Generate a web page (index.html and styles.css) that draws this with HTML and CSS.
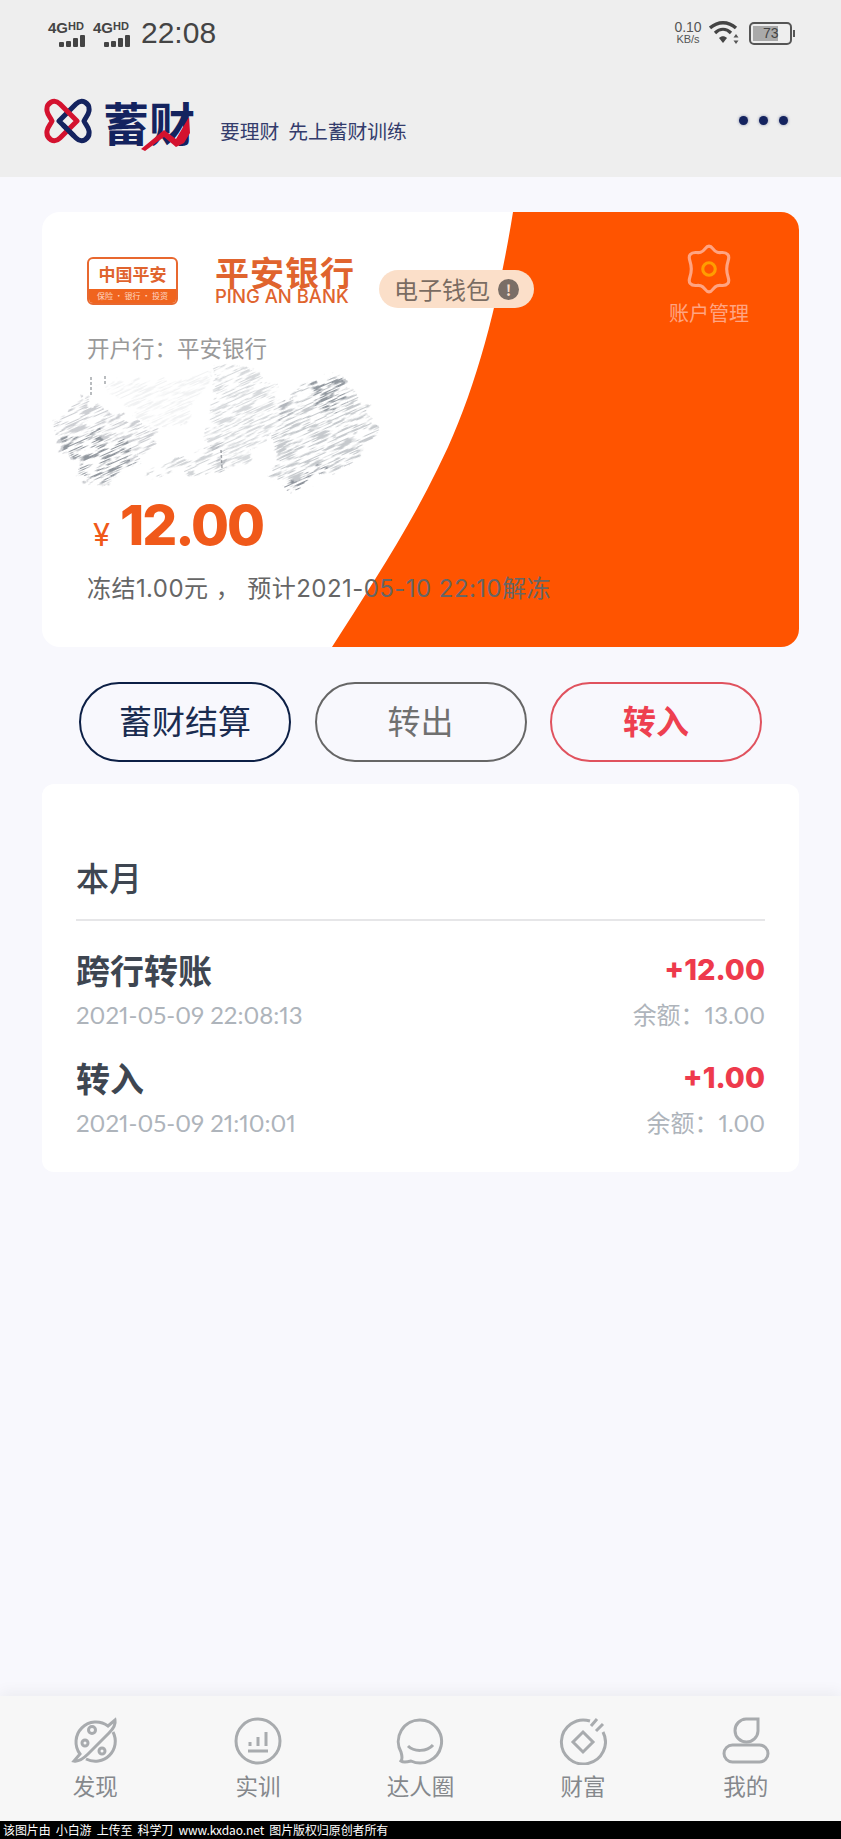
FILE: index.html
```html
<!DOCTYPE html>
<html lang="zh-CN">
<head>
    <meta charset="UTF-8">
    <meta name="viewport" content="width=device-width, initial-scale=1.0">
    <title>蓄财</title>
    <link rel="stylesheet" href="styles.css">
</head>
<body>
    <header class="top">
        <div class="status">
            <div class="status-left">
                <div class="sim">
                    <span class="sim-text">4G<small>HD</small></span>
                    <span class="sim-bars"><i class="b1"></i><i class="b2"></i><i class="b3"></i><i class="b4"></i></span>
                </div>
                <div class="sim">
                    <span class="sim-text">4G<small>HD</small></span>
                    <span class="sim-bars"><i class="b1"></i><i class="b2"></i><i class="b3"></i><i class="b4"></i></span>
                </div>
                <span class="clock">22:08</span>
            </div>
            <div class="status-right">
                <div class="speed"><span>0.10</span><small>KB/s</small></div>
                <svg class="wifi" width="32" height="24" viewBox="0 0 32 24">
                    <path d="M1 7C9 0 19 0 27 7" fill="none" stroke="#444" stroke-width="3.4"/>
                    <path d="M6 12C11 7 17 7 22 12" fill="none" stroke="#444" stroke-width="3.2"/>
                    <path d="M10 17C12.500 14.500 15.500 14.500 18 17L14 22Z" fill="#444"/>
                    <path d="M27 13l2.500 3.500h-5zM27 23l2.500-3.500h-5z" fill="#555"/>
                </svg>
                <div class="battery"><div class="battery-fill"></div><span>73</span></div>
            </div>
        </div>
        <div class="brand">
            <svg class="brand-mark" width="50" height="46" viewBox="0 0 50 46">
                <path d="M16 23L33 6C39 0 47 5 46 13C45.500 17 42 20 41 23C42 26 45.500 29 46 33C47 41 39 46 33 40Z" fill="none" stroke="#14235f" stroke-width="5" stroke-linejoin="round"/>
                <path d="M34 23L17 6C11 0 3 5 4 13C4.500 17 8 20 9 23C8 26 4.500 29 4 33C3 41 11 46 17 40Z" fill="none" stroke="#d4122f" stroke-width="5" stroke-linejoin="round"/>
                <path d="M31 38L20 27" fill="none" stroke="#14235f" stroke-width="5"/>
            </svg>
            <div class="brand-name">
                <span>蓄财</span>
                <svg class="brand-arrow" width="52" height="36" viewBox="0 0 52 36">
                    <path d="M1 32L24 13L36 22L49 0L50 16L44 26L36 30L24 20L5 34Z" fill="#d4122f"/>
                </svg>
            </div>
            <span class="tagline">要理财&nbsp;&nbsp;先上蓄财训练</span>
            <div class="more"><i></i><i></i><i></i></div>
        </div>
    </header>

    <main class="main">
        <section class="card">
            <svg class="card-bg" width="757" height="435" viewBox="0 0 757 435">
                <path d="M471 0C455 100 430 190 395 258C365 320 325 380 290 435L757 435L757 0Z" fill="#ff5400"/>
            </svg>

            <svg class="scribble" width="350" height="140" viewBox="0 0 350 140">
                <defs>
                    <filter id="grain" x="-10%" y="-30%" width="120%" height="160%">
                        <feTurbulence type="fractalNoise" baseFrequency="0.05 0.1" numOctaves="3" seed="9" result="wob"/>
                        <feDisplacementMap in="SourceGraphic" in2="wob" scale="22" xChannelSelector="R" yChannelSelector="G" result="rough"/>
                        <feTurbulence type="fractalNoise" baseFrequency="0.05 0.6" numOctaves="3" seed="4" result="n"/>
                        <feColorMatrix in="n" type="matrix" values="0 0 0 0 0 0 0 0 0 0 0 0 0 0 0 8 0 0 0 -3.900" result="m"/>
                        <feComposite in="rough" in2="m" operator="in"/>
                    </filter>
                </defs>
                <g transform="rotate(-24 175 70)">
                    <g filter="url(#grain)">
                        <g transform="rotate(24 175 70)" fill="#8d939b">
                            <path d="M14 62L43 37L118 70L103 97L57 128L45 120L16 78Z" opacity=".45"/>
                            <path d="M19 72L60 72L100 95L58 126L45 118Z" opacity=".95"/>
                            <path d="M60 25L120 20L170 15L150 60L118 70Z" opacity=".12"/>
                            <path d="M175 8L207 3L233 27L253 50L200 107L180 112L165 70Z" opacity=".35"/>
                            <path d="M110 108L185 85L182 112L105 118Z" opacity=".4"/>
                            <path d="M240 45L267 23L300 15L340 67L333 87L250 132L233 120Z" opacity=".5"/>
                            <path d="M270 20L300 18L305 45L275 50Z" opacity=".9"/>
                            <path d="M240 125L285 105L290 112L250 132Z"/>
                        </g>
                    </g>
                </g>
                <path d="M51 17V36M65 16V26M181 90L182 108" fill="none" stroke="#7a7f86" stroke-width="1.500" stroke-dasharray="3 2" opacity=".7"/>
            </svg>

            <div class="card-top">
                <div class="logos">
                    <div class="pa-box">
                        <span class="pa-name">中国平安</span>
                        <span class="pa-strip">保险 · 银行 · 投资</span>
                    </div>
                    <div class="pa-bank">
                        <span class="pa-bank-cn">平安银行</span>
                        <span class="pa-bank-en">PING AN BANK</span>
                    </div>
                    <div class="wallet-tag">
                        <span>电子钱包</span>
                        <i class="wallet-info">!</i>
                    </div>
                </div>
                <div class="manage">
                    <svg width="48" height="50" viewBox="0 0 46 48">
                        <path d="M23 2C26.500 2 27 7 31 8C35 9 38 6.500 41 10C44 13.500 40 16 40 24C40 32 44 34.500 41 38C38 41.500 35 39 31 40C27 41 26.500 46 23 46C19.500 46 19 41 15 40C11 39 8 41.500 5 38C2 34.500 6 32 6 24C6 16 2 13.500 5 10C8 6.500 11 9 15 8C19 7 19.500 2 23 2Z" fill="none" stroke="#ffa482" stroke-width="3"/>
                        <circle cx="23" cy="24" r="6" fill="none" stroke="#ff9d00" stroke-width="3"/>
                    </svg>
                    <span>账户管理</span>
                </div>
            </div>
            <div class="card-bank">开户行：平安银行</div>
            <div class="balance"><span class="currency">¥</span><span class="amount">12.00</span></div>
            <div class="freeze">冻结1.00元 ， 预计2021-05-10 22:10解冻</div>
        </section>

        <div class="actions">
            <button class="btn btn-navy">蓄财结算</button>
            <button class="btn btn-gray">转出</button>
            <button class="btn btn-red">转入</button>
        </div>

        <section class="records">
            <h2 class="records-title">本月</h2>
            <div class="record">
                <div class="record-row">
                    <span class="record-name">跨行转账</span>
                    <span class="record-amount">+12.00</span>
                </div>
                <div class="record-row record-sub">
                    <span class="record-meta">2021-05-09 22:08:13</span>
                    <span class="record-meta">余额：13.00</span>
                </div>
            </div>
            <div class="record">
                <div class="record-row">
                    <span class="record-name">转入</span>
                    <span class="record-amount">+1.00</span>
                </div>
                <div class="record-row record-sub">
                    <span class="record-meta">2021-05-09 21:10:01</span>
                    <span class="record-meta">余额：1.00</span>
                </div>
            </div>
        </section>
    </main>

    <nav class="tabs">
        <div class="tab">
            <svg width="48" height="48" viewBox="0 0 48 48">
                <path d="M9 37A20 20 0 0 1 37 9L44 3C45 8 42 12 38 16L17 37C13 41 8 45 3 44Z"/>
                <path d="M42 15A20 20 0 0 1 15 42"/>
                <circle cx="21" cy="13" r="3.500"/>
                <circle cx="14" cy="26" r="3"/>
                <circle cx="31" cy="34" r="3"/>
            </svg>
            <span>发现</span>
        </div>
        <div class="tab">
            <svg width="48" height="48" viewBox="0 0 48 48">
                <circle cx="24" cy="24" r="22"/>
                <path d="M14 33H34M16 24V28M24 19V28M32 14V28" transform="translate(0 1)"/>
            </svg>
            <span>实训</span>
        </div>
        <div class="tab">
            <svg width="48" height="48" viewBox="0 0 48 48">
                <path d="M24 3A21.500 21.500 0 1 1 15 44C11 45 7 45.500 5 44C6.500 42 6.500 40 5 35A21.500 21.500 0 0 1 24 3Z"/>
                <path d="M12 29C18 35 31 35 37 28"/>
            </svg>
            <span>达人圈</span>
        </div>
        <div class="tab">
            <svg width="48" height="48" viewBox="0 0 48 48">
                <path d="M31 4A22 22 0 1 0 44 15"/>
                <path d="M24 15L34 25L24 35L14 25Z"/>
                <path d="M32 9L38 2M37 14L44 7"/>
            </svg>
            <span>财富</span>
        </div>
        <div class="tab">
            <svg width="48" height="48" viewBox="0 0 48 48">
                <path d="M24 2H36V14A11.500 11.500 0 1 1 24 2Z"/>
                <rect x="2" y="28" width="44" height="17" rx="8.500"/>
            </svg>
            <span>我的</span>
        </div>
    </nav>
    <footer class="credit">该图片由&nbsp;&nbsp;小白游&nbsp;&nbsp;上传至&nbsp;&nbsp;科学刀&nbsp;&nbsp;www.kxdao.net&nbsp;&nbsp;图片版权归原创者所有</footer>
</body>
</html>
```

FILE: styles.css
```css
* {
    box-sizing: border-box;
}
body {
    margin: 0;
    width: 841px;
    height: 1839px;
    display: flex;
    flex-direction: column;
    overflow: hidden;
    background: #f8f8fd;
    color: #333;
    font-family: "Noto Sans CJK SC", "Noto Sans", sans-serif;
}

/* top area */
.top {
    height: 177px;
    background: #eeeeee;
}
.status {
    height: 66px;
    padding: 0 49px 0 48px;
    display: flex;
    justify-content: space-between;
    align-items: center;
}
.status-left {
    display: flex;
    align-items: center;
}
.sim {
    width: 45px;
    display: flex;
    flex-direction: column;
    font-family: "Liberation Sans", sans-serif;
    color: #444;
}
.sim-text {
    font-size: 15px;
    line-height: 13px;
    font-weight: 700;
    white-space: nowrap;
}
.sim-text small {
    font-size: 11px;
    vertical-align: 3px;
}
.sim-bars {
    display: flex;
    align-items: flex-end;
    gap: 2px;
    height: 13px;
    padding-left: 11px;
}
.sim-bars i {
    width: 5px;
    background: #444;
    border-radius: 1px;
}
.b1 { height: 5px; }
.b2 { height: 6px; }
.b3 { height: 9px; }
.b4 { height: 12px; }
.clock {
    font-family: "Liberation Sans", sans-serif;
    font-size: 30px;
    line-height: 34px;
    color: #444;
    margin-left: 3px;
}
.status-right {
    display: flex;
    align-items: center;
}
.speed {
    display: flex;
    flex-direction: column;
    align-items: center;
    width: 30px;
    font-family: "Liberation Sans", sans-serif;
    font-size: 14px;
    line-height: 12px;
    color: #555;
}
.speed small {
    font-size: 11px;
}
.wifi {
    margin: 0 8px 0 6px;
}
.battery {
    position: relative;
    width: 43px;
    height: 23px;
    border: 2px solid #555;
    border-radius: 5px;
    padding: 2px;
    font-family: "Liberation Sans", sans-serif;
    font-size: 14px;
    line-height: 15px;
    color: #444;
}
.battery::after {
    content: "";
    position: absolute;
    right: -5px;
    top: 6px;
    width: 2px;
    height: 7px;
    background: #555;
}
.battery-fill {
    width: 70%;
    height: 100%;
    background: #aaaaaa;
}
.battery span {
    position: absolute;
    left: 12px;
    top: 2px;
}
.brand {
    height: 111px;
    padding: 10px 53px 0 43px;
    display: flex;
    align-items: flex-start;
}
.brand-mark {
    margin-top: 22px;
}
.brand-name {
    position: relative;
    margin: 12px 0 0 10px;
    width: 117px;
    font-size: 46px;
    line-height: 66px;
    font-weight: 700;
    color: #14235f;
}
.brand-arrow {
    position: absolute;
    left: 37px;
    top: 29px;
}
.tagline {
    margin-top: 40px;
    font-size: 19.800px;
    line-height: 30px;
    color: #343c6c;
}
.more {
    margin: 40px 0 0 auto;
    display: flex;
    gap: 11px;
}
.more i {
    width: 9px;
    height: 9px;
    border-radius: 50%;
    background: #14235f;
    box-shadow: 0 0 3px rgba(20, 35, 95, 0.5);
}

.main {
    flex: 1;
    padding: 35px 42px 0;
}

/* bank card */
.card {
    position: relative;
    width: 757px;
    height: 435px;
    background: white;
    border-radius: 18px;
    overflow: hidden;
}
.card-bg {
    position: absolute;
    left: 0;
    top: 0;
}
.scribble {
    position: absolute;
    left: -2px;
    top: 148px;
    overflow: visible;
}
.card-top,
.card-bank,
.balance,
.freeze {
    position: relative;
}
.card-top {
    display: flex;
    justify-content: space-between;
    align-items: flex-start;
    padding: 32px 50px 0 45px;
    height: 92px;
}
.logos {
    display: flex;
    align-items: flex-end;
    padding-top: 12px;
}
.pa-box {
    width: 91px;
    height: 48px;
    border: 2px solid #e8682f;
    border-radius: 6px;
    display: flex;
    flex-direction: column;
    overflow: hidden;
    text-align: center;
}
.pa-name {
    flex: 1;
    font-size: 17px;
    line-height: 30px;
    font-weight: 700;
    color: #e0642e;
    white-space: nowrap;
}
.pa-strip {
    height: 14px;
    background: #f0641e;
    color: #ffd8c4;
    font-size: 8px;
    line-height: 14px;
    white-space: nowrap;
}
.pa-bank {
    width: 140px;
    margin-left: 37px;
    display: flex;
    flex-direction: column;
    color: #e0642e;
}
.pa-bank-cn {
    font-size: 34px;
    line-height: 32px;
    font-weight: 700;
    letter-spacing: 1px;
    white-space: nowrap;
}
.pa-bank-en {
    font-family: "Inter", sans-serif;
    font-size: 18.500px;
    line-height: 17px;
    font-weight: 500;
    white-space: nowrap;
}
.wallet-tag {
    width: 155px;
    height: 38px;
    margin: 0 0 -3px 24px;
    padding-left: 15px;
    border-radius: 19px;
    background: #fbdfc9;
    display: flex;
    align-items: center;
    gap: 8px;
    font-size: 24px;
    line-height: 36px;
    color: #7a6c62;
}
.wallet-info {
    width: 21px;
    height: 21px;
    border-radius: 50%;
    background: #7a6e66;
    color: #fbdfc9;
    font-style: normal;
    font-weight: 700;
    font-size: 15px;
    line-height: 21px;
    text-align: center;
}
.manage {
    width: 80px;
    display: flex;
    flex-direction: column;
    align-items: center;
    color: #ffa482;
    font-size: 20px;
    line-height: 28px;
    white-space: nowrap;
}
.manage span {
    margin-top: 5px;
}
.card-bank {
    margin: 28px 0 0 45px;
    font-size: 22.500px;
    line-height: 30px;
    color: #999999;
}
.balance {
    margin: 133px 0 0 51px;
    height: 60px;
    display: flex;
    align-items: center;
    color: #f0591a;
}
.currency {
    font-family: "Inter", sans-serif;
    font-size: 31px;
    margin-top: 18px;
    width: 27px;
}
.amount {
    font-family: "Inter", sans-serif;
    font-size: 55px;
    font-weight: 800;
    letter-spacing: -2px;
}
.freeze {
    margin: 18px 0 0 45px;
    font-family: "Inter", "Noto Sans CJK SC", sans-serif;
    font-size: 24px;
    line-height: 32px;
    letter-spacing: 0.45px;
    color: #666666;
    white-space: nowrap;
}

/* buttons */
.actions {
    display: flex;
    justify-content: space-between;
    padding: 35px 37px 0;
}
.btn {
    width: 212px;
    height: 80px;
    padding: 0 0 5px;
    border-radius: 40px;
    background: transparent;
    font-family: inherit;
    font-size: 33px;
}
.btn-navy {
    border: 2.500px solid #0c1f45;
    color: #1a2c50;
}
.btn-gray {
    border: 2.500px solid #666666;
    color: #707070;
}
.btn-red {
    border: 2.500px solid #e0525e;
    color: #ee4050;
    font-weight: 700;
}

/* records */
.records {
    margin-top: 22px;
    height: 388px;
    padding: 69px 34px 0;
    background: white;
    border-radius: 12px;
}
.records-title {
    margin: 0;
    height: 68px;
    border-bottom: 2px solid #e6e6e8;
    font-size: 33px;
    line-height: 48px;
    font-weight: 500;
    color: #3e4651;
}
.record-row {
    display: flex;
    justify-content: space-between;
    align-items: center;
}
.record {
    height: 108px;
    padding-top: 27px;
}
.record-sub {
    margin-top: 2px;
}
.record-name {
    font-size: 34px;
    line-height: 44px;
    font-weight: 700;
    color: #3e4651;
}
.record-amount {
    font-family: "Inter", sans-serif;
    font-size: 29px;
    line-height: 44px;
    font-weight: 800;
    color: #ee3a4c;
}
.record-meta {
    font-family: "Lato", "Noto Sans CJK SC", sans-serif;
    font-size: 24px;
    line-height: 42px;
    font-variant-numeric: proportional-nums;
    color: #aeb4bb;
}

/* bottom tabs */
.tabs {
    height: 125px;
    padding: 21px 14px 0;
    display: flex;
    background: #f7f7f7;
    box-shadow: 0 -4px 14px rgba(0, 0, 0, 0.05);
}
.tab {
    flex: 1;
    display: flex;
    flex-direction: column;
    align-items: center;
    font-size: 22.500px;
    line-height: 30px;
    color: #85888c;
}
.tab svg {
    fill: none;
    stroke: #a8abae;
    stroke-width: 3;
}
.tab span {
    margin-top: 5px;
}
.credit {
    height: 18px;
    padding-left: 3px;
    background: black;
    color: white;
    font-size: 12px;
    line-height: 18px;
    letter-spacing: -0.1px;
    white-space: nowrap;
}
```
